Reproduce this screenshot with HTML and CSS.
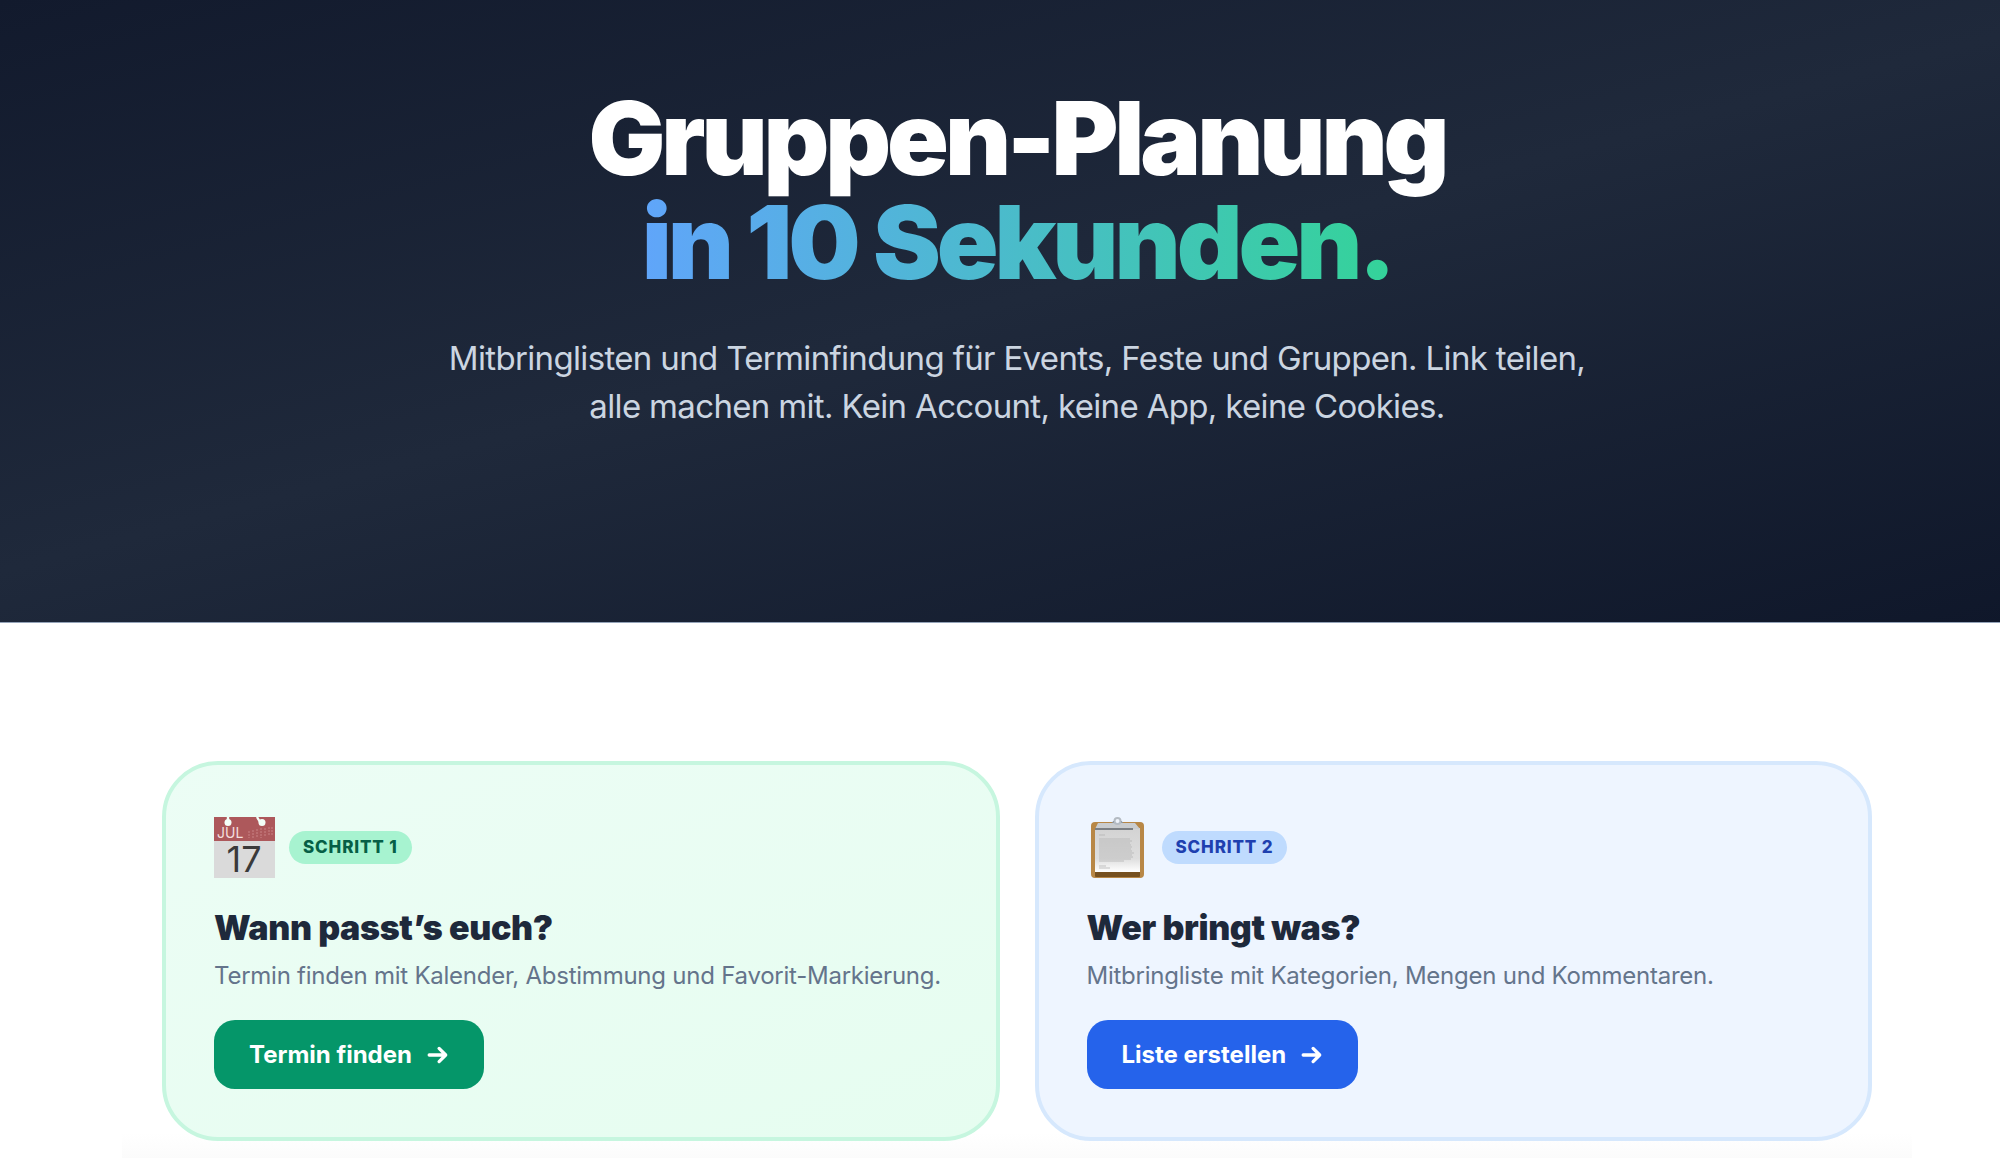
FILE: index.html
```html
<!DOCTYPE html>
<html lang="de">
<head>
  <meta charset="UTF-8" />
  <meta name="viewport" content="width=device-width, initial-scale=1.0" />
  <title>Gruppen-Planung in 10 Sekunden</title>
  <link rel="stylesheet" href="styles.css">
</head>
<body>
  <header class="hero">
    <h1>Gruppen-Planung<br><span class="gradient-text">in 10 Sekunden.</span></h1>
    <p>Mitbringlisten und Terminfindung für Events, Feste und Gruppen. Link teilen, alle machen mit. Kein Account, keine App, keine Cookies.</p>
  </header>

  <main class="steps">
    <section class="card card-green">
      <div class="card-head">
        <svg class="icon" viewBox="0 0 61 61" aria-hidden="true">
          <rect width="61" height="61" fill="#dadada" />
          <rect width="61" height="24" fill="#ad585b" />
          <path d="M14 0v5M43 0l3 5" stroke="#f3fff8" stroke-width="2.4" />
          <circle cx="14" cy="5.500" r="3.500" fill="#f3fff8" />
          <circle cx="48" cy="5.500" r="3.500" fill="#f3fff8" />
          <path d="M35 14v7M39 13v8M43 12v9M47 11v10M51 11v9M55 10v9M58 10v8" stroke="#c98285" stroke-width="1" stroke-dasharray="2 1" />
          <text class="cal-month" x="3" y="21">JUL</text>
          <text class="cal-day" x="30" y="55" text-anchor="middle">17</text>
        </svg>
        <span class="badge">Schritt 1</span>
      </div>
      <h2>Wann passt’s euch?</h2>
      <p>Termin finden mit Kalender, Abstimmung und Favorit-Markierung.</p>
      <a class="btn" href="#termin">Termin finden
        <svg class="arrow" viewBox="0 0 20 20" aria-hidden="true"><path d="M2 10h15M11 4l6 6-6 6" /></svg>
      </a>
    </section>

    <section class="card card-blue">
      <div class="card-head">
        <svg class="icon" viewBox="0 0 61 61" aria-hidden="true">
          <defs>
            <linearGradient id="sheet" x1="0" y1="0" x2="0" y2="1">
              <stop offset="0" stop-color="#d3d3d3" />
              <stop offset=".7" stop-color="#dedede" />
              <stop offset="1" stop-color="#fff" />
            </linearGradient>
          </defs>
          <rect x="4" y="5" width="53" height="56" rx="4" fill="#b88746" />
          <path d="M8 55h45v4a1 1 0 0 1-1 1H9a1 1 0 0 1-1-1z" fill="#76501f" />
          <rect x="8" y="11" width="45" height="44" fill="url(#sheet)" />
          <path d="M12 18h6M12 22h31M12 24h33M12 26h31M12 28h32M12 30h33M12 32h32M12 34h33M12 36h35M12 38h33M12 40h34M12 42h32M12 44h25M12 49h7M12 51h11" stroke="#b4b4b4" stroke-width=".8" />
          <path d="M8 12L11 6h14q3 0 3-3h5q0 3 3 3h12l5 6z" fill="#c9cccf" />
          <path d="M8 12h38" stroke="#7b7f84" stroke-width="2" />
          <path d="M24 6q2 0 2-2h9q0 2 3 2z" fill="#87929d" />
          <circle cx="30.500" cy="4" r="3" fill="#f0f5fc" stroke="#b4bbc3" stroke-width="2" />
        </svg>
        <span class="badge">Schritt 2</span>
      </div>
      <h2>Wer bringt was?</h2>
      <p>Mitbringliste mit Kategorien, Mengen und Kommentaren.</p>
      <a class="btn" href="#liste">Liste erstellen
        <svg class="arrow" viewBox="0 0 20 20" aria-hidden="true"><path d="M2 10h15M11 4l6 6-6 6" /></svg>
      </a>
    </section>
  </main>
</body>
</html>
```

FILE: styles.css
```css
* {
  box-sizing: border-box;
}

html {
  overflow-x: hidden;
}

body {
  margin: 0;
  width: calc(100% + 34px);
  font-family: Inter, "Liberation Sans", sans-serif;
  background: #fff;
  color: #1e293b;
}

.hero {
  padding: 86px 40px 192px;
  text-align: center;
  background: linear-gradient(165deg, #121a2d 0%, #1f293b 49%, #0f172a 100%);
  border-bottom: 1px solid #94a3b8;
}

.hero h1 {
  margin: 0 0 40px;
  font-size: 102px;
  line-height: 104px;
  font-weight: 900;
  letter-spacing: -0.04em;
  color: #fff;
}

.gradient-text {
  display: inline-block;
  background: linear-gradient(90deg, #60a5fa, #34d399);
  -webkit-background-clip: text;
  background-clip: text;
  color: transparent;
}

.hero p {
  max-width: 1180px;
  margin: 0 auto;
  font-size: 33px;
  line-height: 48px;
  letter-spacing: -0.02em;
  color: #cbd5e1;
}

.steps {
  display: grid;
  grid-template-columns: 1fr 1fr;
  gap: 35px;
  max-width: 1790px;
  margin: 0 auto;
  padding: 138px 40px 18px;
  background: linear-gradient(to top, #fbfbfb, #fff 26px);
}

.card {
  padding: 52px 48px 48px;
  border: 4px solid;
  border-radius: 56px;
}

.card-green {
  background: linear-gradient(160deg, #ecfdf5, #e6fdf0);
  border-color: #c6f6df;
}

.card-blue {
  background: #eef5ff;
  border-color: #d6e8fd;
}

.card-head {
  display: flex;
  align-items: center;
  gap: 14px;
  margin-bottom: 28px;
}

.icon {
  width: 61px;
  height: 61px;
  overflow: visible;
}

.cal-month {
  font-size: 14px;
  fill: #f3dede;
}

.cal-day {
  font-size: 36px;
  fill: #3a3a3a;
}

.badge {
  padding: 0 14px;
  border-radius: 17px;
  font-size: 17px;
  line-height: 33px;
  font-weight: 800;
  letter-spacing: 0.05em;
  text-transform: uppercase;
}

.card-green .badge {
  background: #a7f3d0;
  color: #065f46;
}

.card-blue .badge {
  background: #bfdbfe;
  color: #1e40af;
}

.card h2 {
  margin: 0 0 8px;
  font-size: 34px;
  line-height: 44px;
  font-weight: 900;
  letter-spacing: -0.01em;
}

.card p {
  margin: 0 0 26px;
  font-size: 24px;
  line-height: 36px;
  letter-spacing: -0.01em;
  color: #64748b;
}

.btn {
  display: inline-flex;
  align-items: center;
  gap: 15px;
  padding: 0 35px;
  border-radius: 21px;
  font-size: 24px;
  line-height: 69px;
  font-weight: 700;
  color: #fff;
  text-decoration: none;
}

.card-green .btn {
  background: #059669;
}

.card-blue .btn {
  background: #2563eb;
}

.arrow {
  width: 22px;
  height: 22px;
  fill: none;
  stroke: #fff;
  stroke-width: 3;
  stroke-linecap: round;
  stroke-linejoin: round;
}
```
